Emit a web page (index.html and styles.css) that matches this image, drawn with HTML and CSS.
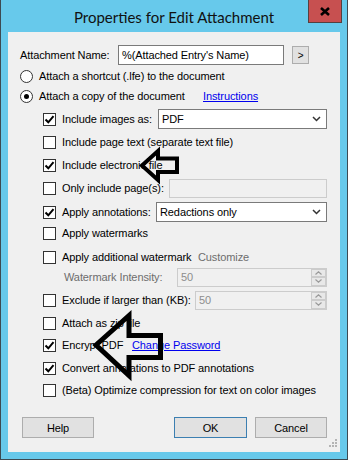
FILE: index.html
```html
<!DOCTYPE html>
<html lang="en">
<head>
    <meta charset="UTF-8">
    <title>Properties for Edit Attachment</title>
    <link rel="stylesheet" href="styles.css">
</head>
<body>
    <div class="window">
        <div class="titlebar">
            <div></div>
            <div class="title">Properties for Edit Attachment</div>
            <div class="close">
                <svg width="12" height="9" viewBox="0 0 12 9"><path d="M2 1 L10 8 M10 1 L2 8" stroke="#000" stroke-width="2.6"/></svg>
            </div>
        </div>
        <div class="client">
            <div class="row">
                <span class="name-label">Attachment Name:</span>
                <div class="textbox name-box">%(Attached Entry's Name)</div>
                <div class="small-btn">&gt;</div>
            </div>
            <div class="row mt1">
                <span class="radio"></span>
                <span>Attach a shortcut (.lfe) to the document</span>
            </div>
            <div class="row mt0">
                <span class="radio on"></span>
                <span class="w-copy">Attach a copy of the document</span>
                <a class="link">Instructions</a>
            </div>
            <div class="row sub">
                <span class="check on"><svg width="11" height="11" viewBox="0 0 11 11"><path d="M1.5 5.5 L4.3 8.3 L9.5 2.2" fill="none" stroke="#000" stroke-width="2"/></svg></span>
                <span>Include images as:</span>
                <div class="select w169">PDF<svg class="chev" width="9" height="6" viewBox="0 0 9 6"><path d="M1 1 L4.5 4.5 L8 1" fill="none" stroke="#333" stroke-width="1.5"/></svg></div>
            </div>
            <div class="row sub">
                <span class="check"></span>
                <span>Include page text (separate text file)</span>
            </div>
            <div class="row sub">
                <span class="check on"><svg width="11" height="11" viewBox="0 0 11 11"><path d="M1.5 5.5 L4.3 8.3 L9.5 2.2" fill="none" stroke="#000" stroke-width="2"/></svg></span>
                <span>Include electronic file</span>
            </div>
            <div class="row sub">
                <span class="check"></span>
                <span>Only include page(s):</span>
                <div class="textbox disabled w158"></div>
            </div>
            <div class="row sub mt4">
                <span class="check on"><svg width="11" height="11" viewBox="0 0 11 11"><path d="M1.5 5.5 L4.3 8.3 L9.5 2.2" fill="none" stroke="#000" stroke-width="2"/></svg></span>
                <span>Apply annotations:</span>
                <div class="select w170">Redactions only<svg class="chev" width="9" height="6" viewBox="0 0 9 6"><path d="M1 1 L4.5 4.5 L8 1" fill="none" stroke="#333" stroke-width="1.5"/></svg></div>
            </div>
            <div class="row sub mt1">
                <span class="check"></span>
                <span>Apply watermarks</span>
            </div>
            <div class="row sub mt4">
                <span class="check"></span>
                <span class="w-additional">Apply additional watermark</span>
                <span class="muted">Customize</span>
            </div>
            <div class="row intensity mt0">
                <span class="muted">Watermark Intensity:</span>
                <div class="spin w150">
                    <span class="spin-value">50</span>
                    <div class="spin-btns">
                        <div class="spin-btn"><svg width="7" height="4" viewBox="0 0 7 4"><path d="M0.5 3.5 L3.5 0.8 L6.5 3.5" fill="none" stroke="#9a9a9a" stroke-width="1.2"/></svg></div>
                        <div class="spin-btn"><svg width="7" height="4" viewBox="0 0 7 4"><path d="M0.5 0.5 L3.5 3.2 L6.5 0.5" fill="none" stroke="#9a9a9a" stroke-width="1.2"/></svg></div>
                    </div>
                </div>
            </div>
            <div class="row sub">
                <span class="check"></span>
                <span>Exclude if larger than (KB):</span>
                <div class="spin w132">
                    <span class="spin-value">50</span>
                    <div class="spin-btns">
                        <div class="spin-btn"><svg width="7" height="4" viewBox="0 0 7 4"><path d="M0.5 3.5 L3.5 0.8 L6.5 3.5" fill="none" stroke="#9a9a9a" stroke-width="1.2"/></svg></div>
                        <div class="spin-btn"><svg width="7" height="4" viewBox="0 0 7 4"><path d="M0.5 0.5 L3.5 3.2 L6.5 0.5" fill="none" stroke="#9a9a9a" stroke-width="1.2"/></svg></div>
                    </div>
                </div>
            </div>
            <div class="row sub">
                <span class="check"></span>
                <span>Attach as zip file</span>
            </div>
            <div class="row sub mt2">
                <span class="check on"><svg width="11" height="11" viewBox="0 0 11 11"><path d="M1.5 5.5 L4.3 8.3 L9.5 2.2" fill="none" stroke="#000" stroke-width="2"/></svg></span>
                <span class="w-encrypt">Encrypt PDF</span>
                <a class="link">Change Password</a>
            </div>
            <div class="row sub">
                <span class="check on"><svg width="11" height="11" viewBox="0 0 11 11"><path d="M1.5 5.5 L4.3 8.3 L9.5 2.2" fill="none" stroke="#000" stroke-width="2"/></svg></span>
                <span>Convert annotations to PDF annotations</span>
            </div>
            <div class="row sub mt2">
                <span class="check"></span>
                <span>(Beta) Optimize compression for text on color images</span>
            </div>
            <div class="buttons">
                <div class="button">Help</div>
                <div class="button default push">OK</div>
                <div class="button">Cancel</div>
            </div>
            <svg class="grip" width="9" height="9" viewBox="0 0 9 9">
                <rect x="6" y="0" width="2" height="2" fill="#b4b4b4"/>
                <rect x="3" y="3" width="2" height="2" fill="#b4b4b4"/>
                <rect x="6" y="3" width="2" height="2" fill="#b4b4b4"/>
                <rect x="0" y="6" width="2" height="2" fill="#b4b4b4"/>
                <rect x="3" y="6" width="2" height="2" fill="#b4b4b4"/>
                <rect x="6" y="6" width="2" height="2" fill="#b4b4b4"/>
            </svg>
        </div>

        <!-- callout arrows drawn over the dialog -->
        <svg class="arrows" width="348" height="460" viewBox="0 0 348 460">
            <path d="M142 165.5 L158 151 L158 158.5 L177 158.5 L177 172 L158 172 L158 180 Z" fill="none" stroke="#000" stroke-width="4" stroke-linejoin="miter"/>
            <path d="M96 345 L129 315.5 L129 335.5 L160.5 335.5 L160.5 357.5 L129 357.5 L129 375.5 Z" fill="none" stroke="#000" stroke-width="5" stroke-linejoin="miter"/>
        </svg>
    </div>
</body>
</html>
```

FILE: styles.css
```css
body {
    margin: 0;
    font-family: 'Liberation Sans', Arial, sans-serif;
    font-size: 11px;
    letter-spacing: -0.1px;
    color: #000;
    overflow: hidden;
}

.window {
    position: relative;
    width: 348px;
    height: 460px;
    box-sizing: border-box;
    background: #67c9eb;
    border: 1px solid #3d4a52;
    border-top: none;
    display: flex;
    flex-direction: column;
}

.titlebar {
    height: 32px;
    display: grid;
    grid-template-columns: 1fr auto 1fr;
}

.title {
    font-family: 'Lato', sans-serif;
    font-size: 15px;
    letter-spacing: 0;
    line-height: 15px;
    padding-top: 10px;
    color: #111;
}

.close {
    justify-self: end;
    width: 32px;
    height: 22px;
    margin-right: 5px;
    background: #c75050;
    border: 1px solid #55403f;
    border-top: none;
    display: flex;
    justify-content: center;
    align-items: center;
}

.client {
    flex: 1;
    margin: 0 7px 7px 7px;
    background: #f0f0f0;
    padding: 13px 13px 0 12px;
    display: flex;
    flex-direction: column;
}

.row {
    height: 20px;
    margin-top: 3px;
    display: flex;
    align-items: center;
    white-space: nowrap;
}

.row:first-child {
    margin-top: 0;
}

.mt0 { margin-top: 0; }
.mt1 { margin-top: 1px; }
.mt2 { margin-top: 2px; }
.mt4 { margin-top: 4px; }

.sub {
    padding-left: 23px;
}

.intensity {
    padding-left: 44px;
}

.name-label {
    width: 98px;
    flex-shrink: 0;
}

.textbox {
    box-sizing: border-box;
    height: 20px;
    background: #fff;
    border: 1px solid #7a7a7a;
    padding: 0 3px;
    line-height: 18px;
    flex-shrink: 0;
}

.name-box {
    width: 166px;
}

.textbox.disabled {
    height: 19px;
    margin-left: auto;
    background: #f0f0f0;
    border-color: #cccccc;
}

.small-btn {
    box-sizing: border-box;
    width: 17px;
    height: 18px;
    margin-left: 8px;
    background: #e1e1e1;
    border: 1px solid #adadad;
    font-size: 10px;
    display: flex;
    justify-content: center;
    align-items: center;
}

.radio {
    box-sizing: border-box;
    flex-shrink: 0;
    width: 13px;
    height: 13px;
    border: 1px solid #333;
    border-radius: 50%;
    background: #fff;
    margin-right: 6px;
    display: flex;
    justify-content: center;
    align-items: center;
}

.radio.on::after {
    content: '';
    width: 5px;
    height: 5px;
    border-radius: 50%;
    background: #000;
}

.check {
    box-sizing: border-box;
    flex-shrink: 0;
    width: 13px;
    height: 13px;
    border: 1px solid #333;
    background: #fff;
    margin-right: 6px;
    display: flex;
    justify-content: center;
    align-items: center;
}

.link {
    color: #0000ee;
    text-decoration: underline;
}

.w-copy { width: 164px; flex-shrink: 0; }
.w-additional { width: 136px; flex-shrink: 0; }
.w-encrypt { width: 70px; flex-shrink: 0; }

.muted {
    color: #6d6d6d;
}

.select {
    box-sizing: border-box;
    flex-shrink: 0;
    height: 20px;
    margin-left: auto;
    background: #fff;
    border: 1px solid #7a7a7a;
    padding: 0 3px;
    display: flex;
    align-items: center;
}

.chev {
    margin-left: auto;
    margin-right: 2px;
}

.w169 { width: 169px; }
.w170 { width: 171px; }
.w158 { width: 158px; }
.w150 { width: 150px; }
.w132 { width: 132px; }

.spin {
    box-sizing: border-box;
    flex-shrink: 0;
    height: 19px;
    margin-left: auto;
    border: 1px solid #cccccc;
    background: #f0f0f0;
    display: flex;
    color: #8d8d8d;
}

.spin-value {
    flex: 1;
    padding-left: 3px;
    line-height: 17px;
}

.spin-btns {
    display: flex;
    flex-direction: column;
}

.spin-btn {
    box-sizing: border-box;
    width: 15px;
    height: 8.5px;
    background: #e8e8e8;
    border: 1px solid #cccccc;
    display: flex;
    justify-content: center;
    align-items: center;
}

.buttons {
    margin-top: 17px;
    display: flex;
    gap: 8px;
    padding-left: 2px;
}

.button {
    box-sizing: border-box;
    width: 72px;
    height: 21px;
    background: #e1e1e1;
    border: 1px solid #adadad;
    display: flex;
    justify-content: center;
    align-items: center;
}

.button.default {
    width: 73px;
    border-color: #3c7fb1;
}

.push {
    margin-left: auto;
}

.grip {
    align-self: flex-end;
    margin-top: auto;
    margin-right: -11px;
    margin-bottom: 4px;
}

.arrows {
    position: absolute;
    top: 0;
    left: -1px;
    pointer-events: none;
}
```
